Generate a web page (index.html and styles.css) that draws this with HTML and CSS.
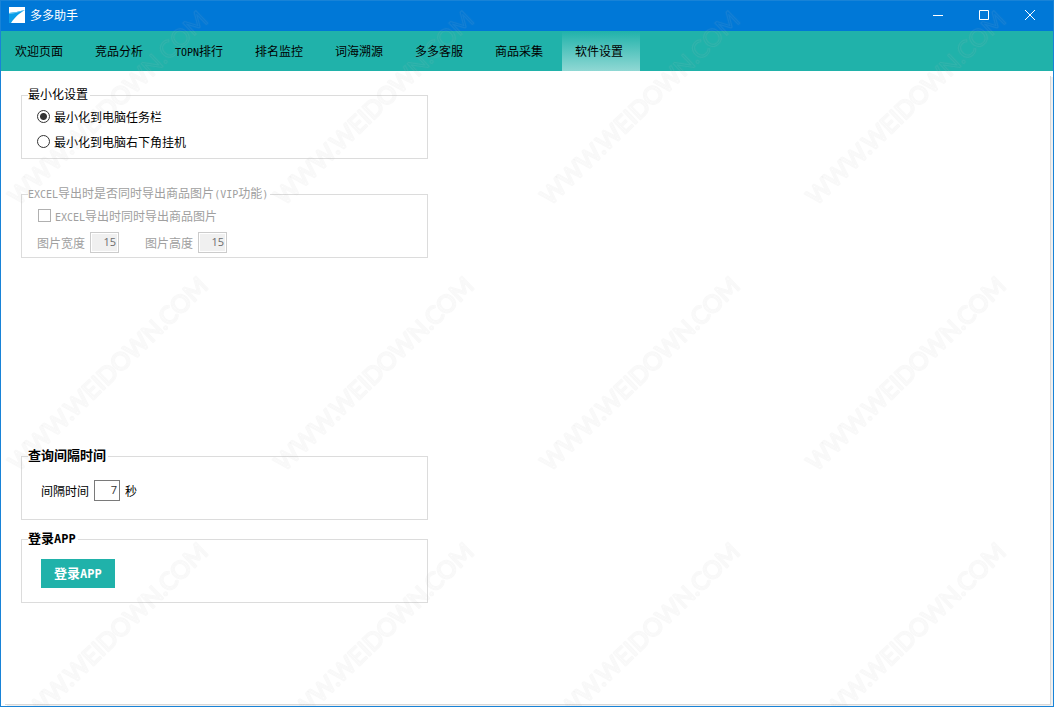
FILE: index.html
```
<!DOCTYPE html>
<html lang="zh-CN">
<head>
<meta charset="utf-8">
<title>多多助手</title>
<link rel="stylesheet" href="styles.css">
</head>
<body>
<div class="window">
  <header class="titlebar">
    <svg class="logo" width="16" height="16" viewBox="0 0 16 16" aria-hidden="true">
      <path fill="#fff" d="M0 0h16v16H0z"/>
      <path fill="#0c9ee8" d="M0 6C5 5.500 10 4.500 16 3 10 6.500 6 10 2 16H0z"/>
      <path fill="#6cc8f2" d="M0 6C5 5.500 10 4.500 16 3 11 5 6 6.500 0 7z"/>
    </svg>
    <h1 class="title">多多助手</h1>
    <div class="controls">
      <button class="control" type="button" aria-label="最小化"><svg width="10" height="10" viewBox="0 0 10 10"><path d="M0 5.500h10"/></svg></button>
      <button class="control" type="button" aria-label="最大化"><svg width="10" height="10" viewBox="0 0 10 10"><path d="M.5.5h9v9h-9z"/></svg></button>
      <button class="control" type="button" aria-label="关闭"><svg width="10" height="10" viewBox="0 0 10 10"><path d="M0 0l10 10M10 0L0 10"/></svg></button>
    </div>
  </header>
  <nav class="tabs">
    <button class="tab" type="button">欢迎页面</button>
    <button class="tab" type="button">竞品分析</button>
    <button class="tab" type="button"><span class="latin">TOPN</span>排行</button>
    <button class="tab" type="button">排名监控</button>
    <button class="tab" type="button">词海溯源</button>
    <button class="tab" type="button">多多客服</button>
    <button class="tab" type="button">商品采集</button>
    <button class="tab active" type="button" aria-current="page">软件设置</button>
  </nav>
  <main class="content">
    <form class="panel">
      <fieldset class="group minimize">
        <legend>最小化设置</legend>
        <label class="option"><input type="radio" name="minimize" checked>最小化到电脑任务栏</label>
        <label class="option"><input type="radio" name="minimize">最小化到电脑右下角挂机</label>
      </fieldset>
      <fieldset class="group export" disabled>
        <legend><span class="latin">EXCEL</span>导出时是否同时导出商品图片<span class="latin">(VIP</span>功能<span class="latin">)</span></legend>
        <label class="option"><input type="checkbox"><span><span class="latin">EXCEL</span>导出时同时导出商品图片</span></label>
        <div class="sizes">
          <label class="field">图片宽度<input class="number" type="text" value="15"></label>
          <label class="field">图片高度<input class="number" type="text" value="15"></label>
        </div>
      </fieldset>
      <fieldset class="group interval">
        <legend class="strong">查询间隔时间</legend>
        <div class="row">
          <label class="field" for="seconds">间隔时间</label>
          <input class="number" id="seconds" type="text" value="7">
          <span class="unit">秒</span>
        </div>
      </fieldset>
      <fieldset class="group login">
        <legend class="strong">登录<span class="latin">APP</span></legend>
        <button class="primary" type="button">登录<span class="latin">APP</span></button>
      </fieldset>
    </form>
  </main>
  <svg class="watermark" width="100%" height="100%" aria-hidden="true">
    <defs>
      <pattern id="mark" x="0" y="-28" width="266" height="266" patternUnits="userSpaceOnUse">
        <g transform="translate(110 138) rotate(-44)">
          <text class="mark-outer" text-anchor="middle" y="4">WWW.WEIDOWN.COM</text>
          <text class="mark-inner" text-anchor="middle" y="4">WWW.WEIDOWN.COM</text>
        </g>
      </pattern>
    </defs>
    <rect width="100%" height="100%" fill="url(#mark)"/>
  </svg>
</div>
</body>
</html>
```
FILE: styles.css
```
* {
  box-sizing: border-box;
}

body {
  margin: 0;
  color: #000;
  font: 12px/16px "Noto Sans CJK SC", sans-serif;
}

button,
input {
  margin: 0;
  color: inherit;
  font: inherit;
}

.latin {
  font-family: "DejaVu Sans Mono", monospace;
  font-size: 10px;
  line-height: 1;
}

.window {
  position: relative;
  display: flex;
  flex-direction: column;
  min-height: 100vh;
  border: 1px solid #1883d7;
  background: #fff;
}

.titlebar {
  display: flex;
  align-items: center;
  height: 30px;
  padding: 0 0 2px 8px;
  background: #0078d7;
  color: #fff;
}

.title {
  margin: 0 auto 0 5px;
  font-size: 12px;
  font-weight: 400;
}

.controls {
  display: flex;
  height: 100%;
}

.control {
  display: grid;
  place-items: center;
  width: 46px;
  padding: 0;
  border: 0;
  background: none;
}

.control path {
  fill: none;
  stroke: #fff;
}

.tabs {
  display: flex;
  gap: 2px;
  height: 40px;
  padding-left: 1px;
  background: #20b2aa;
}

.tab {
  width: 78px;
  padding: 0 0 0 13px;
  border: 0;
  background: none;
  text-align: left;
  white-space: nowrap;
}

.active {
  background: linear-gradient(#20b2aa, #90d8d4);
}

.content {
  display: flex;
  flex: 1;
  padding: 5px 2px 1px 4px;
}

.panel {
  flex: 1;
  padding: 10px 16px;
  border: solid #d9d9d9;
  border-width: 0 1px 1px 0;
  box-shadow: 2px 1px #f0f0f0;
}

.group {
  width: 100%;
  max-width: 407px;
  height: 73px;
  margin: 0 0 10px;
  padding: 0 6px;
  border: 1px solid #dcdcdc;
}

.group legend {
  padding: 0 2px 2px 0;
}

.strong,
.primary {
  font-size: 13px;
  font-weight: 700;
}

.strong .latin,
.primary .latin {
  font-size: 12px;
}

.minimize {
  margin-bottom: 26px;
}

.export {
  margin-bottom: 189px;
  color: #a0a0a0;
}

.option {
  display: flex;
  align-items: center;
  gap: 4px;
  height: 25px;
  padding-left: 9px;
}

.option input {
  appearance: none;
  width: 13px;
  height: 13px;
  border: 1px solid #333;
  background: #fff;
}

.option input[type="radio"] {
  border-radius: 50%;
}

.option input[type="radio"]:checked {
  background: radial-gradient(circle, #333 3px, #fff 4px);
}

.option input[type="checkbox"] {
  border-color: #b0b0b0;
}

.export .option {
  padding-left: 10px;
}

.sizes {
  display: flex;
  gap: 26px;
  padding: 4px 0 0 9px;
}

.field {
  display: flex;
  align-items: center;
  gap: 5px;
}

.number {
  width: 26px;
  height: 21px;
  padding: 0 2px 2px;
  border: 1px solid #7a7a7a;
  background: #fff;
  color: #333;
  font: 11px/16px "Open Sans", sans-serif;
  text-align: right;
}

.number:disabled {
  width: 29px;
  border-color: #ccc;
  background: #f0f0f0;
  box-shadow: inset 0 0 0 1px #fff;
  color: #6d6d6d;
}

.row {
  display: flex;
  align-items: center;
  gap: 5px;
  padding: 15px 0 0 13px;
}

.primary {
  display: block;
  height: 29px;
  margin: 11px 0 0 13px;
  padding: 0 13px 2px;
  border: 0;
  background: #20b2aa;
  color: #fff;
}

.watermark {
  position: absolute;
  inset: 0;
  pointer-events: none;
}

.watermark text {
  fill: none;
  stroke-linejoin: round;
  font: 24px Lato, sans-serif;
}

.mark-outer {
  stroke: #808080;
  stroke-opacity: 0.05;
  stroke-width: 2px;
}

.mark-inner {
  stroke: #fff;
  stroke-opacity: 0.05;
  stroke-width: 1px;
}
```
